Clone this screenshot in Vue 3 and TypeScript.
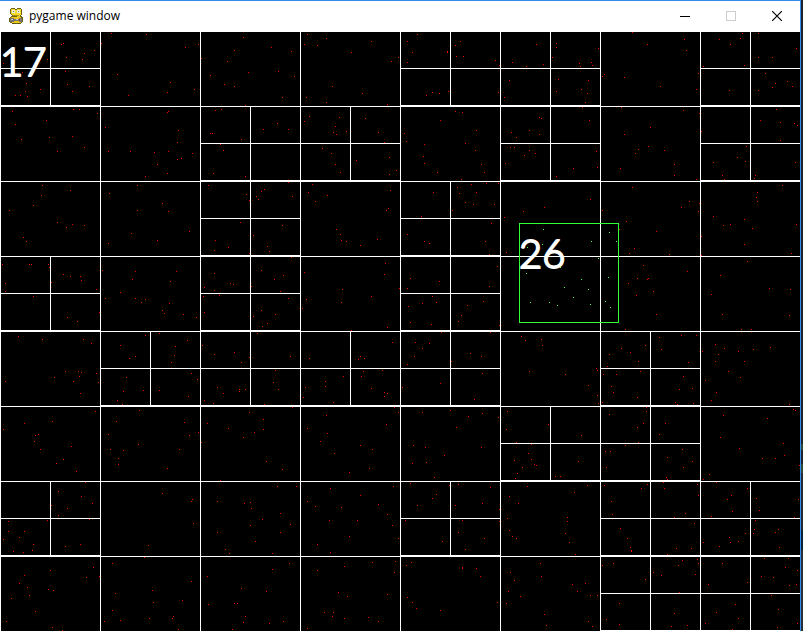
<script setup lang="ts">
interface Cluster {
  x: number
  y: number
  points: string
}

const columns = 8
const rows = 8
const cellWidth = 100
const cellHeight = 75

// Columns that are split into quadrants, one list for each row.
const splitCells: number[][] = [
  [0, 4, 5, 7],
  [2, 3, 5, 7],
  [2, 4],
  [0, 2, 4],
  [1, 2, 3, 4, 6],
  [5, 6],
  [0, 4, 6, 7],
  [6, 7],
]

const clusters: Cluster[] = [
  {
    x: 0,
    y: -1,
    points: `3,33 47,29 22,42 26,53 25,61 15,65 20,65 27,66 40,59 61,14 63,13 66,27 82,29 84,23 94,20 65,41 67,54 72,61 89,56
      111,3 146,4 101,13 185,17 198,14 117,44 170,52 167,62 194,59 128,65 243,7 234,20 201,28 227,31 210,45 248,42 224,54 234,56 245,75
      12,81 15,94 21,109 46,90 49,107 57,121 72,106 84,117 73,79 79,79 97,83 105,97 108,121 130,121 154,122 168,121 167,82 168,81
      178,100 177,112 192,123 181,128 177,129 157,134 167,143 145,146 215,80 221,79 210,103 212,103 241,109 263,99 220,114 223,120
      213,143 245,146 42,155 41,165 33,175 9,180 70,160 57,192 66,197 72,194 84,195 23,207 109,163 137,155 137,180 162,173 168,181
      131,203 189,201 208,155 246,164 249,170 240,192 253,205 256,166 258,169 261,161 264,159`,
  },
  {
    x: 265,
    y: -1,
    points: `6,17 26,21 13,41 29,46 17,67 42,4 39,14 52,15 61,8 86,22 106,11 126,31 133,27 67,56 97,63 41,67 61,72 122,74
      152,4 142,11 147,22 142,32 182,21 182,22 195,11 190,15 191,26 198,26 230,30 234,35 161,65 167,62 174,63 183,61 233,62
      247,32 261,36 244,50 239,67 12,93 23,99 44,86 39,91 74,87 70,96 68,102 71,104 81,101 100,88 113,102 119,112 57,118 66,123
      70,134 75,142 91,130 124,127 131,140 124,144 190,81 197,82 175,90 139,103 141,111 159,114 158,126 159,133 172,142 211,100
      200,113 210,120 216,134 219,142 196,149 246,102 251,107 264,100 245,117 249,117 259,125 264,120 240,133
      23,152 27,166 17,195 47,154 43,162 50,171 62,165 125,160 123,178 121,180 71,199 75,204 112,209 168,162 156,186 142,204
      192,157 194,163 206,154 211,162 221,153 233,153 200,172 208,174 229,174 187,180 226,193 258,181 239,187`,
  },
  {
    x: 530,
    y: -1,
    points: `6,14 13,34 26,13 26,17 22,27 68,18 49,33 50,36 61,32 62,35 28,49 26,61 58,50 51,59 57,63 55,72
      102,2 117,14 154,9 156,20 74,44 72,46 94,47 130,56 168,43 166,59 189,9 200,14 212,3 210,8 214,35 173,36 228,3 266,18
      228,27 242,27 199,60 235,43 245,53 242,57 228,60 257,51 262,56 9,87 11,88 9,104 52,77 59,90 5,123 26,146 43,138 66,121 67,137
      91,77 153,80 169,83 120,97 94,104 118,116 108,119 105,123 134,120 144,134 90,138 144,145 166,149 171,101 230,90 246,79
      250,92 264,93 267,95 250,110 216,116 207,127 215,131 183,132 192,145 194,149 265,132 225,145 224,148
      14,177 60,169 102,157 72,180 96,191 126,201 159,171 151,177 169,173 168,181 89,199 252,155 227,162 226,167 227,171
      183,186 193,195 200,194 214,189 222,198 266,194 171,206`,
  },
  {
    x: 0,
    y: 199,
    points: `26,11 157,10 108,13 215,10 228,17 214,20 249,23 267,16 269,21 2,34 29,34 31,34 48,34 49,37 5,53 5,61 63,44 70,46
      80,46 81,50 51,52 96,59 33,66 67,87 77,91 99,82 102,40 135,41 132,49 176,41 170,51 120,62 105,68 135,68 145,69 141,72
      169,73 162,80 164,83 183,84 196,87 214,43 204,57 214,60 230,53 233,54 261,40 251,56 203,66 219,65 204,82 261,80 253,86
      267,93 262,96 18,106 42,109 83,109 91,113 5,151 54,147 65,141 78,141 81,142 79,146 73,151 96,143 98,152 80,163
      145,105 120,115 135,126 129,128 159,103 187,110 175,116 174,125 171,132 126,147 123,161 143,160 117,170 122,174
      191,143 197,149 159,160 188,166 202,115 214,124 234,122 241,132 249,127 257,103 217,157 223,163 239,159 239,161 245,159
      204,170 213,173 264,174 3,199 24,193 52,191 95,181 35,205 38,204 139,180 116,191 108,204 184,192 198,202 189,205
      249,182 207,193 228,198 263,189 263,199 254,202 243,207`,
  },
  {
    x: 265,
    y: 199,
    points: `76,10 81,11 95,15 159,11 164,13 220,11 224,24 241,22 26,27 18,45 9,49 15,61 23,68 10,84 120,33 39,42 119,44 77,59
      134,58 106,66 41,69 76,72 37,78 122,97 86,100 145,48 142,58 174,51 232,36 224,56 143,76 157,73 167,66 171,72 145,92
      166,94 218,71 202,75 196,85 193,91 234,95 25,126 10,140 8,152 13,159 44,128 127,112 95,126 93,129 99,128 78,146 60,151
      60,156 40,157 38,167 68,172 98,141 96,146 117,140 106,158 119,162 122,163 119,166 150,112 164,113 176,102 157,118
      149,126 142,134 225,102 205,123 216,126 186,131 137,157 175,153 217,143 209,169 256,106 260,110 264,141
      27,177 61,185 42,198 62,203 129,177 133,182 121,194 157,182 185,180 203,186 217,183 233,187 191,197 242,181 241,199`,
  },
  {
    x: 530,
    y: 199,
    points: `104,18 99,23 139,24 214,14 261,23 171,25 113,35 157,41 107,48 117,49 118,48 98,53 123,61 106,65 126,84 95,99
      217,31 190,45 239,58 260,59 181,64 192,84 259,85 211,99 221,99 11,109 12,115 35,144 58,155 66,138 67,140 67,165 68,173
      91,118 115,115 100,122 79,124 108,131 77,136 129,107 151,105 166,105 131,119 158,132 73,144 86,144 110,141 81,156
      83,162 107,167 72,172 153,146 149,159 162,158 145,172 147,174 163,173 185,114 172,121 194,118 188,124 208,121 223,119
      240,117 185,131 214,131 198,141 210,147 175,150 186,162 181,170 259,174 18,194 51,205 79,184 116,177 116,181 113,193
      107,197 135,193 129,204 193,185 237,188 263,179 265,180 190,207`,
  },
  {
    x: 0,
    y: 399,
    points: `34,11 40,19 71,16 63,29 56,33 76,41 138,14 110,19 123,20 179,19 118,28 118,34 167,38 201,12 266,31 220,50
      58,61 85,52 81,66 92,73 51,75 67,78 58,85 8,91 47,90 8,101 24,101 3,109 19,107 33,114 32,120 13,121 23,122 89,89 80,114
      65,116 162,63 192,69 191,71 193,93 148,115 217,71 244,73 250,72 251,78 262,89 250,95 217,102 255,111 225,119 229,123
      50,140 24,145 19,153 27,157 29,165 11,168 48,159 53,160 35,181 6,191 52,197 62,200 93,137 86,147 99,146
      144,127 112,133 191,151 115,163 152,160 153,172 182,170 112,180 173,186 172,188 149,188 120,190 104,191 178,199
      207,146 241,158 266,161 208,174 234,173 237,173 245,186 243,192 232,199 269,193`,
  },
  {
    x: 265,
    y: 399,
    points: `17,39 55,11 95,15 107,19 69,23 104,38 84,42 148,15 160,17 179,25 216,17 147,33 161,32 169,47 251,12 266,14 263,23
      249,30 266,29 257,37 252,43 250,48 269,34 12,56 31,56 15,83 25,94 15,102 7,123 65,58 128,56 95,65 42,71 50,76 76,77
      113,74 122,84 64,90 92,90 127,95 84,106 133,108 52,114 65,122 145,53 184,55 171,64 167,68 152,75 193,54 225,57 190,75
      217,73 234,79 140,90 177,111 197,90 234,91 193,102 219,108 200,119 262,56 244,66 253,73 242,88 244,100 247,106 251,108
      24,133 7,139 18,191 52,140 79,136 107,132 130,131 129,142 73,162 82,166 122,164 59,182 68,182 67,186 79,188 103,187
      113,191 42,198 146,132 141,135 197,137 197,138 211,138 215,146 142,167 147,172 151,178 175,180 232,172
      245,142 249,150 243,161 255,166 241,173`,
  },
  {
    x: 530,
    y: 399,
    points: `6,35 48,31 25,46 30,46 108,12 95,15 75,21 80,21 76,37 152,19 137,27 162,31 153,37 136,47 137,49 209,18 253,13
      254,25 232,28 245,28 269,35 179,44 173,49 57,55 44,62 37,87 37,91 35,103 39,112 45,124 74,55 117,54 111,58 81,71 82,84
      133,52 134,58 167,54 168,65 155,83 144,87 90,98 97,108 100,117 101,120 101,121 164,93 146,118 161,118 137,124
      186,52 217,58 201,65 197,69 202,81 181,86 226,68 268,69 229,80 264,87 215,103 199,107 200,112 208,111 189,116 173,112
      225,90 224,99 223,103 248,99 245,102 249,117 10,133 11,146 42,154 55,153 47,161 60,165 67,165 14,184 16,195 58,191
      62,196 72,135 83,133 115,149 152,130 167,129 168,133 148,135 123,142 131,145 165,144 149,162 89,173 76,189 89,194
      144,183 141,196 157,195 192,133 217,152 178,154 234,128 258,128 255,137 267,140 231,146 243,147 259,155 266,154
      205,174 186,182 208,188 175,193 202,199 241,165 248,179 267,193 247,197`,
  },
]

// Points caught by the query rectangle.
const selected: Cluster = {
  x: 500,
  y: 169,
  points: `43,29 42,44 27,47 91,41 109,32 116,41 98,58 26,73 108,77 81,79 64,87 88,89 73,97 30,102 49,102 57,105 90,104
    105,101 110,107 60,67`,
}

function block(x: number, y: number, width: number, height: number): string {
  return `M${x} ${y}h${width}v${height}h${-width}z`
}

function dots(cluster: Cluster): string {
  return cluster.points
    .trim()
    .split(/\s+/)
    .map((pair) => {
      const [px, py] = pair.split(',').map(Number)
      return block(cluster.x + px, cluster.y + py, 1, 1)
    })
    .join('')
}

function gridLines(): string {
  const parts: string[] = []
  for (let c = 0; c < columns; c++) parts.push(block(c * cellWidth, 0, 1, 600))
  for (let r = 0; r < rows; r++) {
    const top = r * cellHeight
    parts.push(block(0, top, 800, 1))
    for (const c of splitCells[r]) {
      const left = c * cellWidth
      parts.push(block(left, top + 37, 100, 1), block(left, top + 74, 100, 1), block(left + 50, top, 1, 75))
    }
  }
  return parts.join(' ')
}

const gridPath = gridLines()
const redPath = clusters.map(dots).join('')
const greenPath = dots(selected)
</script>

<template>
  <div class="desktop">
    <main class="window">
      <header class="titlebar">
        <svg class="logo" viewBox="0 0 16 18" aria-hidden="true">
          <path d="M3 1h3l2 1 2-1h3l1 2v4l-1 2 2 2v4l-3 2H5l-3-1-1-3 1-3 2-1-2-3V3z" fill="#6b6218" />
          <path d="M3 2h3l2 1 2-1h3v5l-2 2H5L3 7z" fill="#f4dc2c" />
          <path d="M3 10h3l6-1 2 3-1 4H5l-3-2z" fill="#e8ca1c" />
          <path d="M4 3h3v3H4zM9 3h3v3H9z" fill="#e9e9dc" />
          <path d="M5 4h1v1H5zM10 4h1v1h-1z" fill="#8c8a5c" />
          <path d="M5 8h6v1H5z" fill="#a88e12" />
          <path d="M2 11h3l2 1h3l2-1h2v4h-3l-1-1H6l-1 1H2z" fill="#77726e" />
          <path d="M3 12h2v1H3zM8 12h2v1H8z" fill="#c9c5c0" />
          <path d="M11 12h1v2h-1z" fill="#a14c3d" />
          <path d="M4 16h3v1H4zM10 16h2v1h-2z" fill="#5b4d12" />
        </svg>
        <h1 class="title">pygame window</h1>
        <div class="controls">
          <button type="button" class="control" aria-label="Minimize">
            <svg viewBox="0 0 10 10"><path d="M0 5h10v1H0z" /></svg>
          </button>
          <button type="button" class="control" aria-label="Maximize" disabled>
            <svg viewBox="0 0 10 10"><path d="M0 0h10v10H0zM1 1v8h8V1z" fill-rule="evenodd" /></svg>
          </button>
          <button type="button" class="control close" aria-label="Close">
            <svg viewBox="0 0 10 10"><path d="M0 0L10 10M10 0L0 10" /></svg>
          </button>
        </div>
      </header>
      <svg class="surface" viewBox="0 0 800 600">
        <path class="dots" :d="redPath" />
        <path class="lines" :d="gridPath" />
        <path class="range" d="M519 192h100v100h-100zM520 193v98h98v-98z" />
        <path class="found" :d="greenPath" />
        <text class="count" x="0" y="45">17</text>
        <text class="count" x="519" y="237">26</text>
      </svg>
    </main>
    <div class="backdrop"></div>
  </div>
</template>

<style>
body {
  margin: 0;
  background: #1f2327;
}
</style>

<style scoped>
.desktop {
  display: grid;
  grid-template-columns: minmax(0, 1fr) 2px;
}

.window {
  border-top: 1px solid #308cee;
  border-right: 1px solid #308cee;
  background: #fff;
}

.titlebar {
  display: flex;
  align-items: center;
  height: 30px;
  padding-left: 8px;
}

.logo {
  width: 16px;
  height: 18px;
  shape-rendering: crispEdges;
}

.title {
  margin: 0 0 0 5px;
  font: 400 12px/18px "Open Sans", "Noto Sans", sans-serif;
  color: #000;
}

.controls {
  display: flex;
  margin-left: auto;
}

.control {
  display: flex;
  align-items: center;
  justify-content: center;
  width: 46px;
  height: 28px;
  padding: 0;
  border: 0;
  background: none;
}

.control svg {
  width: 10px;
  height: 10px;
  fill: #000;
}

.control:disabled svg {
  fill: #ccc;
}

.close path {
  fill: none;
  stroke: #000;
  stroke-width: 1.2;
}

.surface {
  display: block;
  width: 100%;
  background: #000;
}

.lines,
.dots,
.range,
.found {
  shape-rendering: crispEdges;
}

.lines {
  fill: #fff;
}

.dots {
  fill: #f00;
}

.range {
  fill: #3f3;
  fill-rule: evenodd;
}

.found {
  fill: #4f4;
}

.count {
  font-family: Lato, "DejaVu Sans", sans-serif;
  font-size: 40px;
  font-weight: 300;
  fill: #fff;
  stroke: #fff;
  stroke-width: 2px;
  stroke-linejoin: round;
}

.backdrop {
  background: linear-gradient(#1f2327 0 444px, #2c4a38 444px 450px, #1f2327 450px 464px, #2c4a38 464px 473px, #252a30 473px 530px, #082238 530px 550px, #2a2f34 550px);
}
</style>
